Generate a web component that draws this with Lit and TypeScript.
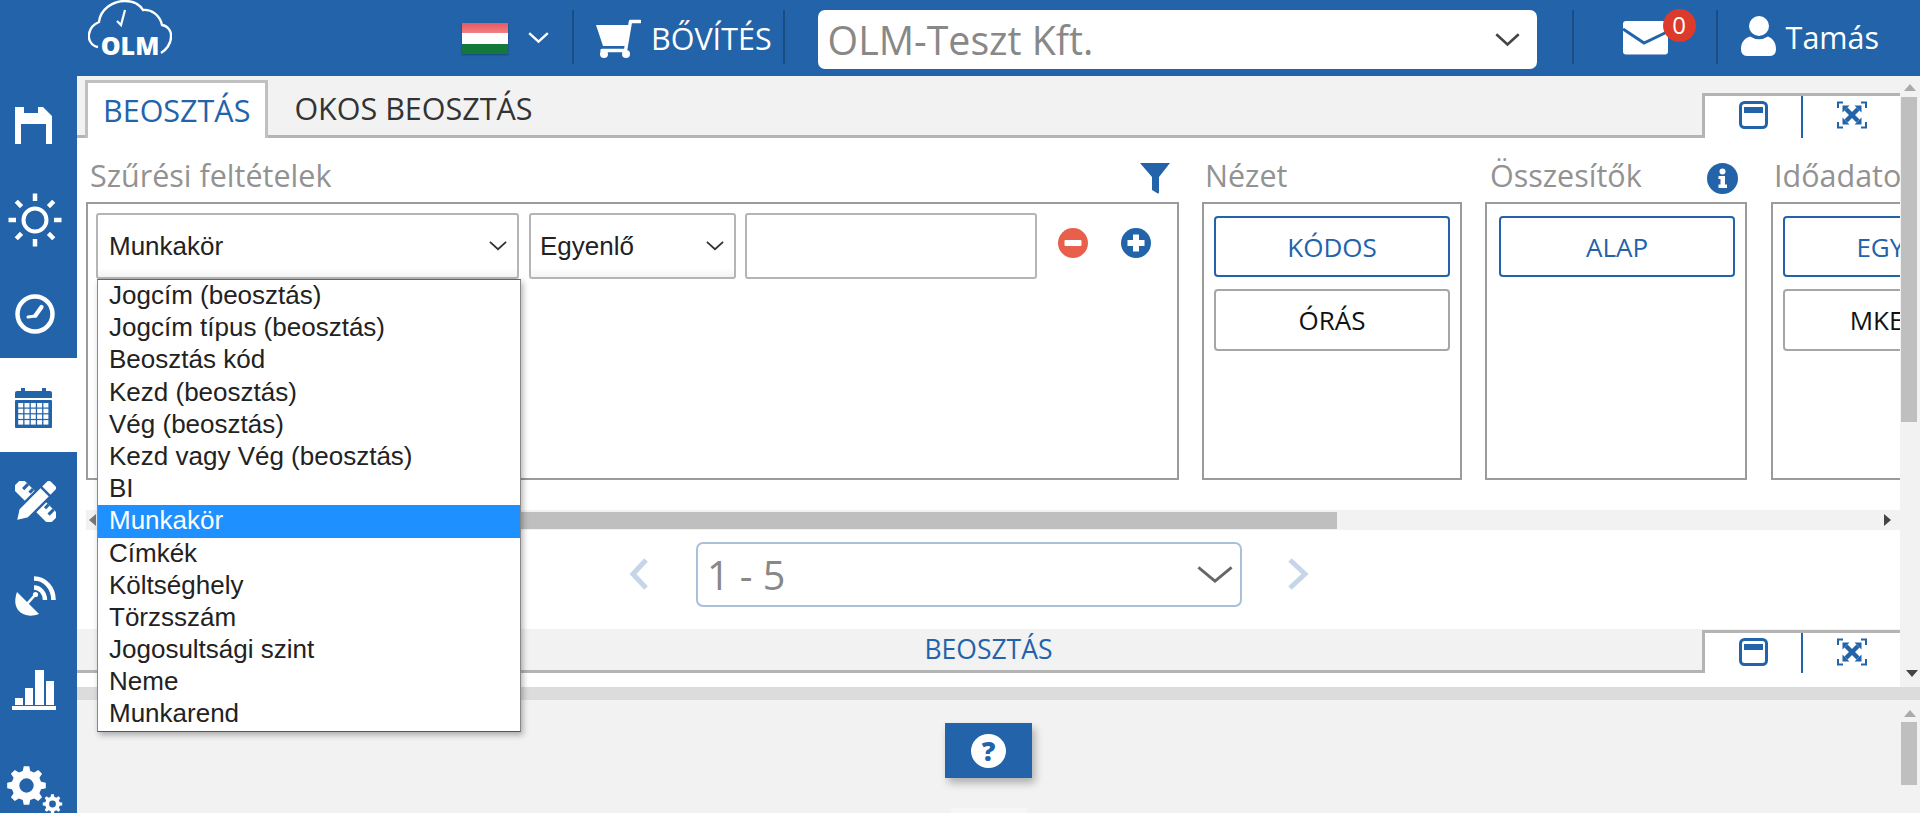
import { LitElement, html, css, svg } from 'lit';
import { customElement } from 'lit/decorators.js';

const BLUE = '#2263a9';

// gear outline as a polygon plus a round hole
function gear(cx: number, cy: number, ro: number, ri: number, hole: number, teeth: number) {
  const pts: string[] = [];
  const step = (Math.PI * 2) / teeth;
  for (let i = 0; i < teeth; i++) {
    const a = i * step - Math.PI / 2;
    const seq: [number, number][] = [
      [a - step * 0.32, ri],
      [a - step * 0.18, ro],
      [a + step * 0.18, ro],
      [a + step * 0.32, ri],
    ];
    for (const [ang, r] of seq) {
      pts.push(`${(cx + Math.cos(ang) * r).toFixed(2)} ${(cy + Math.sin(ang) * r).toFixed(2)}`);
    }
  }
  return `M${pts.join('L')}Z M${cx - hole} ${cy}a${hole} ${hole} 0 1 0 ${hole * 2} 0a${hole} ${hole} 0 1 0 ${-hole * 2} 0Z`;
}

const chevron = (w: number, h: number, color: string, sw = 2) => html`
  <svg width=${w} height=${h} viewBox="0 0 ${w} ${h}" fill="none" stroke=${color} stroke-width=${sw}>
    <polyline points="${sw / 2},${sw / 2} ${w / 2},${h - sw} ${w - sw / 2},${sw / 2}"></polyline>
  </svg>`;

const saveIcon = html`<svg width="37" height="37" viewBox="0 0 37 37" fill="#fff">
  <path d="M0 0H9V6H23V0H28L37 9V37H31V17H6V37H0Z"></path></svg>`;

const sunRays = [0, 45, 90, 135, 180, 225, 270, 315];
const sunIcon = html`<svg width="54" height="54" viewBox="0 0 54 54" fill="none" stroke="#fff">
  <circle cx="27" cy="27" r="11.5" stroke-width="4"></circle>
  ${sunRays.map((r) => svg`<line x1="27" y1="0.5" x2="27" y2="8" stroke-width="4.5" transform="rotate(${r} 27 27)"></line>`)}
</svg>`;

const clockIcon = html`<svg width="40" height="40" viewBox="0 0 40 40" fill="none" stroke="#fff">
  <circle cx="20" cy="20" r="17.5" stroke-width="4.5"></circle>
  <path d="M20.5 21.5L26.5 13" stroke-width="4.2" stroke-linecap="round"></path>
  <path d="M20.5 22L13 23" stroke-width="3" stroke-linecap="round"></path>
</svg>`;

const calCells = [0, 1, 2, 3].flatMap((r) => [0, 1, 2, 3, 4].map((c) => [c, r]));
const calendarIcon = html`<svg width="37" height="40" viewBox="0 0 37 40" fill=${BLUE}>
  <rect x="6" y="0" width="4" height="5"></rect>
  <rect x="27" y="0" width="4" height="5"></rect>
  <path d="M0 5Q0 3 2 3H35Q37 3 37 5V10H0Z"></path>
  <rect x="0" y="12" width="37" height="28" rx="1"></rect>
  ${calCells.map(([c, r]) => svg`<rect x=${3.2 + c * 6.3} y=${15 + r * 5.7} width="5" height="4.5" fill="#fff"></rect>`)}
</svg>`;

const toolsIcon = html`<svg width="41" height="41" viewBox="0 0 41 41">
  <g transform="translate(20.5 20.5) rotate(45)">
    <rect x="-26" y="-7" width="52" height="14" rx="1.5" fill="#fff"></rect>
    <rect x="-19" y="-7" width="3" height="7" fill=${BLUE}></rect>
    <rect x="-12" y="-7" width="3" height="5" fill=${BLUE}></rect>
    <rect x="10" y="-7" width="3" height="5" fill=${BLUE}></rect>
    <rect x="17" y="-7" width="3" height="7" fill=${BLUE}></rect>
  </g>
  <g transform="translate(20.5 20.5) rotate(-45)">
    <path d="M-28 0L-17 -7H22Q26 -7 26 -3V3Q26 7 22 7H-17Z" fill="#fff" stroke=${BLUE} stroke-width="2.4"></path>
    <rect x="13" y="-8" width="2.4" height="16" fill=${BLUE}></rect>
  </g>
</svg>`;

const dishIcon = html`<svg width="41" height="41" viewBox="0 0 41 41" fill="none" stroke="#fff">
  <path d="M2 17L24 39C16 42 8 41 3 35C-1 29 0 23 2 17Z" fill="#fff" stroke="none"></path>
  <path d="M12 29L20 20" stroke-width="2.6"></path>
  <circle cx="20.5" cy="19.5" r="2.6" fill="#fff" stroke="none"></circle>
  <path d="M19 3.5C30 3.5 38.5 13 38.5 25" stroke-width="4.6"></path>
  <path d="M19 12.5C25 12.5 30 18 30 25" stroke-width="4.4"></path>
</svg>`;

const chartIcon = html`<svg width="44" height="40" viewBox="0 0 44 40" fill="#fff">
  <rect x="3" y="28" width="8" height="7"></rect>
  <rect x="13" y="18" width="8" height="17"></rect>
  <rect x="23" y="0" width="9" height="35"></rect>
  <rect x="34" y="11" width="8" height="24"></rect>
  <rect x="0" y="36" width="44" height="4"></rect>
</svg>`;

const gearsIcon = html`<svg width="56" height="48" viewBox="0 0 56 48" fill="#fff" fill-rule="evenodd">
  <path d=${gear(19.5, 19.5, 19.5, 15, 7.2, 8)}></path>
  <path d=${gear(45.5, 38, 9.8, 7.4, 3.4, 8)}></path>
</svg>`;

const cartIcon = html`<svg width="45" height="39" viewBox="0 0 45 39">
  <path d="M0 6H33L29 27H7Z" fill="#fff"></path>
  <path d="M44 2.5H34.5L29.5 31.5H6" fill="none" stroke="#fff" stroke-width="3.4" stroke-linejoin="round" stroke-linecap="round"></path>
  <circle cx="8" cy="35" r="4" fill="#fff"></circle>
  <circle cx="30" cy="35" r="4" fill="#fff"></circle>
</svg>`;

const mailIcon = html`<svg width="45" height="34" viewBox="0 0 45 34">
  <rect x="0" y="0" width="45" height="33.5" rx="3" fill="#fff"></rect>
  <path d="M0 8L21 22L44 11" fill="none" stroke=${BLUE} stroke-width="3"></path>
</svg>`;

const userIcon = html`<svg width="35" height="40" viewBox="0 0 35 40" fill="#fff">
  <circle cx="18" cy="10" r="10"></circle>
  <path d="M0 33C0 26 4 22 9 20.5Q18 26 27 20.5C31 22 35 26 35 33Q35 40 29 40H6Q0 40 0 33Z"></path>
</svg>`;

const logo = html`<svg width="84" height="62" viewBox="0 0 84 62" fill="none" stroke="#fff">
  <path d="M10 47C3 46 0 39 1 34C2 28 6 24 11 22C12 10 24 1 37 1C46 1 52 5 55 10C63 9 72 15 74 25C80 26 83.5 31 83 37C83 44 78 50 73 53" stroke-width="2.4"></path>
  <path d="M29 21L33 25L37 10" stroke-width="2.2"></path>
  <text x="42" y="55" text-anchor="middle" fill="#fff" stroke="none" font-family="'Open Sans', sans-serif" font-weight="800" font-size="25">OLM</text>
</svg>`;

const flag = html`<svg width="46" height="31" viewBox="0 0 46 31">
  <defs><linearGradient id="fr" x1="0" y1="0" x2="0" y2="1"><stop offset="0" stop-color="#e8575f"></stop><stop offset="1" stop-color="#f07f83"></stop></linearGradient></defs>
  <rect width="46" height="10" fill="url(#fr)"></rect>
  <rect y="10" width="46" height="11" fill="#fff"></rect>
  <rect y="21" width="46" height="10" rx="1.5" fill="#13793b"></rect>
</svg>`;

const windowIcon = html`<svg width="29" height="28" viewBox="0 0 29 28">
  <rect x="1.5" y="1.5" width="26" height="25" rx="4" fill="none" stroke=${BLUE} stroke-width="3"></rect>
  <rect x="5" y="6" width="19" height="6" fill=${BLUE}></rect>
</svg>`;

const expandIcon = html`<svg width="30" height="28" viewBox="0 0 30 28" fill="none" stroke=${BLUE}>
  <path d="M1 7V1.5H6M24 1.5H29V7M29 21V26.5H24M6 26.5H1V21" stroke-width="2"></path>
  <path d="M9 8L21 20M21 8L9 20" stroke-width="4.4"></path>
  <path d="M5.5 4.5H12.5L5.5 11.5ZM24.5 4.5H17.5L24.5 11.5ZM24.5 23.5H17.5L24.5 16.5ZM5.5 23.5H12.5L5.5 16.5Z" fill=${BLUE} stroke="none"></path>
</svg>`;

const funnelIcon = html`<svg width="30" height="31" viewBox="0 0 30 31" fill=${BLUE}>
  <path d="M0 0H30L19 14V29Q19 31.5 17 30L12 27V14Z"></path>
</svg>`;

const infoIcon = html`<svg width="31" height="31" viewBox="0 0 31 31">
  <circle cx="15.5" cy="15.5" r="15.5" fill=${BLUE}></circle>
  <circle cx="15.5" cy="8.5" r="3" fill="#fff"></circle>
  <path d="M11.5 13H18V21.5H20V25H11.5V21.5H13.5V16H11.5Z" fill="#fff"></path>
</svg>`;

const minusIcon = html`<svg width="30" height="30" viewBox="0 0 30 30">
  <circle cx="15" cy="15" r="15" fill="#e8604c"></circle>
  <rect x="6.5" y="12" width="17" height="6" rx="1" fill="#fff"></rect>
</svg>`;

const plusIcon = html`<svg width="30" height="30" viewBox="0 0 30 30">
  <circle cx="15" cy="15" r="15" fill=${BLUE}></circle>
  <path d="M12 6.5H18V12H23.5V18H18V23.5H12V18H6.5V12H12Z" fill="#fff"></path>
</svg>`;

const helpIcon = html`<svg width="35" height="34" viewBox="0 0 35 34">
  <ellipse cx="17.5" cy="17" rx="17.5" ry="17" fill="#fff"></ellipse>
  <text x="17.5" y="27" text-anchor="middle" fill=${BLUE} font-family="'Open Sans', sans-serif" font-weight="800" font-size="27">?</text>
</svg>`;

const tri = (dir: 'up' | 'down' | 'left' | 'right', color: string) => {
  const pts = {
    up: '0,8 6,1 12,8',
    down: '0,1 12,1 6,8',
    left: '8,0 8,12 1,6',
    right: '1,0 8,6 1,12',
  }[dir];
  return html`<svg width="12" height="12" viewBox="0 0 12 12"><polygon points=${pts} fill=${color}></polygon></svg>`;
};

const navItems = [
  { icon: saveIcon, nudge: true },
  { icon: sunIcon },
  { icon: clockIcon },
  { icon: calendarIcon, active: true, nudge: true },
  { icon: toolsIcon },
  { icon: dishIcon },
  { icon: chartIcon, nudge: true },
  { icon: gearsIcon, last: true },
];

const options = [
  'Jogcím (beosztás)',
  'Jogcím típus (beosztás)',
  'Beosztás kód',
  'Kezd (beosztás)',
  'Vég (beosztás)',
  'Kezd vagy Vég (beosztás)',
  'BI',
  'Munkakör',
  'Címkék',
  'Költséghely',
  'Törzsszám',
  'Jogosultsági szint',
  'Neme',
  'Munkarend',
];

@customElement('app-root')
export class AppRoot extends LitElement {
  static styles = css`
    :host {
      display: block;
      width: 1920px;
      height: 813px;
      overflow: hidden;
      font-family: 'Open Sans', sans-serif;
      background: #fff;
      --blue: #2263a9;
    }
    svg { display: block; flex: none; }

    .header {
      height: 76px;
      background: var(--blue);
      display: flex;
      align-items: center;
      color: #fff;
    }
    .logo { margin-left: 88px; align-self: flex-start; height: 57px; }
    .flag { margin-left: 290px; box-shadow: 0 1px 2px rgba(0, 0, 0, 0.3); }
    .lang-chev { margin-left: 20px; }
    .sep { width: 2px; height: 54px; background: #1a4c86; flex: none; margin-top: -2px; }
    .sep1 { margin-left: 23px; }
    .cart { margin-left: 22px; }
    .grow { margin-left: 10px; font-size: 30.5px; margin-right: 11px; }
    .company {
      margin-left: 33px;
      width: 719px;
      height: 59px;
      margin-top: 3px;
      background: #fff;
      border-radius: 7px;
      display: flex;
      align-items: center;
      justify-content: space-between;
      padding: 0 17px 0 10px;
      box-sizing: border-box;
      color: #888;
      font-size: 39.3px;
    }
    .sep3 { margin-left: 35px; }
    .mail { margin-left: 49px; position: relative; }
    .badge {
      position: absolute;
      left: 40px;
      top: -12px;
      width: 33px;
      height: 33px;
      border-radius: 50%;
      background: #dc3a2a;
      font-size: 24px;
      line-height: 31px;
      text-align: center;
    }
    .sep4 { margin-left: 48px; }
    .user { margin-left: 23px; margin-top: -4px; }
    .name { margin-left: 10px; font-size: 30.5px; margin-top: -2px; }

    .body { display: flex; height: 737px; }

    .nav { width: 77px; background: var(--blue); flex: none; overflow: hidden; }
    .nav-item {
      height: 94px;
      padding: 5px 7px 0 0;
      box-sizing: border-box;
      display: flex;
      align-items: center;
      justify-content: center;
    }
    .nav-item.active { background: #fff; }
    .nav-item.nudge svg { margin-right: 3px; }
    .nav-item.last { padding-top: 16px; height: 95px; }

    .main { flex: 1; min-width: 0; display: flex; flex-direction: column; position: relative; }
    .upper { height: 611px; display: flex; }
    .panel { width: 1823px; display: flex; flex-direction: column; }

    .tabstrip {
      height: 62px;
      background: #f2f2f2;
      border-bottom: 3px solid #b4b4b4;
      box-sizing: border-box;
      padding: 4px 0 0 8px;
      display: flex;
      align-items: stretch;
    }
    .tab {
      font-size: 30.5px;
      color: #333;
      display: flex;
      align-items: center;
      padding: 0 15px 2px 26px;
      margin-bottom: -3px;
    }
    .tab.active {
      background: #fff;
      color: var(--blue);
      border: 3px solid #c0c0c0;
      border-bottom: 0;
      padding: 0 15px 2px 15px;
    }
    .winctl {
      margin-left: auto;
      margin-top: 13px;
      margin-bottom: -3px;
      width: 198px;
      box-sizing: border-box;
      background: #fff;
      border: 3px solid #b4b4b4;
      border-width: 3px 0 0 3px;
      display: flex;
    }
    .winctl > div {
      display: flex;
      align-items: center;
      justify-content: center;
      padding-bottom: 5px;
    }
    .winctl > div:first-child { width: 96px; border-right: 2px solid var(--blue); }
    .winctl > div:last-child { flex: 1; }

    .filters {
      height: 372px;
      overflow: hidden;
      display: flex;
      gap: 23px;
      padding-left: 9px;
    }
    .col { flex: none; }
    .col-head {
      height: 64px;
      box-sizing: border-box;
      padding: 10px 9px 0 3px;
      display: flex;
      justify-content: space-between;
      align-items: center;
      font-size: 30.5px;
      color: #929292;
    }
    .col-head svg { margin-top: 6px; }
    .col-box {
      height: 278px;
      box-sizing: border-box;
      border: 2px solid #9b9b9b;
      padding: 12px 10px;
      display: flex;
      flex-direction: column;
      gap: 12px;
      background: #fff;
    }
    .c-filter { width: 1093px; }
    .c-filter .col-head { padding-left: 4px; }
    .c-view { width: 260px; }
    .c-sum { width: 262px; }
    .c-sum .col-head { padding-left: 5px; }
    .c-sum .col-box { padding-left: 12px; }
    .c-time { width: 260px; margin-left: 1px; }
    .btn {
      height: 61px;
      width: 236px;
      flex: none;
      box-sizing: border-box;
      border-radius: 4px;
      display: flex;
      align-items: center;
      justify-content: center;
      font-size: 26px;
      white-space: nowrap;
      background: #fff;
    }
    .btn.on { border: 2px solid var(--blue); color: var(--blue); }
    .btn.off { border: 2px solid #a6a6a6; color: #111; height: 62px; }

    .filter-row {
      display: flex;
      align-items: flex-start;
      font-family: 'Liberation Sans', Arial, sans-serif;
      font-size: 26px;
      color: #222;
      margin-top: -3px;
    }
    .fld {
      height: 66px;
      box-sizing: border-box;
      border: 2px solid #b5b5b5;
      border-radius: 3px;
      display: flex;
      align-items: center;
      justify-content: space-between;
      background: linear-gradient(#fff 85%, #f4f4f4);
    }
    .fld-a { width: 423px; padding: 0 10px 0 11px; margin-left: -2px; }
    .fld-b { width: 207px; padding: 0 10px 0 9px; margin-left: 10px; }
    .fld-c { width: 292px; margin-left: 9px; background: #fff; }
    .act-minus { margin-left: 21px; margin-top: 15px; }
    .act-plus { margin-left: 33px; margin-top: 15px; }

    .hbar {
      height: 20px;
      margin-left: 9px;
      background: #f2f2f2;
      display: flex;
      align-items: center;
      flex: none;
    }
    .hbar .start { margin-left: 2px; }
    .hbar .thumb { width: 1237px; height: 17px; background: #bfbfbf; }
    .hbar .end { margin-left: auto; margin-right: 5px; }

    .pager {
      height: 99px;
      box-sizing: border-box;
      padding: 12px 0 0 552px;
      display: flex;
      align-items: flex-start;
      flex: none;
    }
    .pg-arrow { margin-top: 16px; }
    .pg-select {
      width: 546px;
      height: 65px;
      margin: 0 45px 0 47px;
      box-sizing: border-box;
      border: 2px solid #a9c0da;
      border-radius: 7px;
      display: flex;
      align-items: center;
      justify-content: space-between;
      padding: 0 7px 0 9px;
      font-size: 39.5px;
      color: #888;
    }

    .botstrip {
      height: 44px;
      background: #f2f2f2;
      border-bottom: 3px solid #b4b4b4;
      box-sizing: border-box;
      display: grid;
      grid-template-columns: 1fr auto 1fr;
      flex: none;
    }
    .botstrip .title { font-size: 26.5px; color: var(--blue); line-height: 40px; grid-column: 2; }
    .botstrip .winctl { grid-column: 3; justify-self: end; margin: 1px 0 -3px; }
    .botstrip .winctl > div { padding-bottom: 3px; }
    .gap { height: 14px; flex: none; }

    .vbar {
      width: 20px;
      background: #f2f2f2;
      flex: none;
      display: flex;
      flex-direction: column;
      align-items: flex-start;
      box-sizing: border-box;
      padding-left: 1px;
    }
    .vbar .arrow { width: 17px; display: flex; justify-content: center; }
    .vbar .thumb { width: 16px; background: #bfbfbf; }
    .v-up { padding-top: 7px; }
    .v-up .thumb { height: 325px; margin-top: 2px; }
    .v-up .arrow.bottom { margin-top: auto; margin-left: 2px; padding-bottom: 6px; }
    .v-low { padding-top: 9px; }
    .v-low .thumb { height: 63px; margin-top: 1px; }

    .graybar { height: 13px; background: #dcdcdc; flex: none; }

    .lower { flex: 1; display: flex; background: #f2f2f2; min-height: 0; }
    .lower-in {
      width: 1823px;
      box-sizing: border-box;
      padding-top: 23px;
      display: flex;
      flex-direction: column;
      align-items: center;
    }
    .help {
      width: 87px;
      height: 55px;
      background: var(--blue);
      box-shadow: 3px 5px 8px rgba(0, 0, 0, 0.28);
      display: flex;
      align-items: center;
      justify-content: center;
      flex: none;
    }
    .stub { width: 76px; height: 10px; background: #f6f6f6; margin-top: 30px; flex: none; }

    .menu {
      position: absolute;
      left: 20px;
      top: 203px;
      width: 424px;
      box-sizing: border-box;
      background: #fff;
      border: 1px solid #888;
      border-top-color: #666;
      border-bottom-color: #555;
      box-shadow: 2px 3px 6px rgba(0, 0, 0, 0.3);
      font-family: 'Liberation Sans', Arial, sans-serif;
      font-size: 26px;
      color: #222;
    }
    .menu div {
      height: 32.2px;
      line-height: 31px;
      padding-left: 11px;
    }
    .menu div.sel { background: #1e90ff; color: #fff; }
  `;

  private winctl() {
    return html`<div class="winctl"><div>${windowIcon}</div><div>${expandIcon}</div></div>`;
  }

  render() {
    return html`
      <div class="header">
        <div class="logo">${logo}</div>
        <div class="flag">${flag}</div>
        <div class="lang-chev">${chevron(21, 12, '#fff', 2.4)}</div>
        <div class="sep sep1"></div>
        <div class="cart">${cartIcon}</div>
        <div class="grow">BŐVÍTÉS</div>
        <div class="sep"></div>
        <div class="company">
          <span>OLM-Teszt Kft.</span>
          ${chevron(25, 14, '#444', 2.6)}
        </div>
        <div class="sep sep3"></div>
        <div class="mail">${mailIcon}<div class="badge">0</div></div>
        <div class="sep sep4"></div>
        <div class="user">${userIcon}</div>
        <div class="name">Tamás</div>
      </div>
      <div class="body">
        <div class="nav">
          ${navItems.map(
            (n) => html`<div class="nav-item ${n.active ? 'active' : ''} ${n.last ? 'last' : ''} ${n.nudge ? 'nudge' : ''}">${n.icon}</div>`
          )}
        </div>
        <div class="main">
          <div class="upper">
            <div class="panel">
              <div class="tabstrip">
                <div class="tab active">BEOSZTÁS</div>
                <div class="tab">OKOS BEOSZTÁS</div>
                ${this.winctl()}
              </div>
              <div class="filters">
                <div class="col c-filter">
                  <div class="col-head"><span>Szűrési feltételek</span>${funnelIcon}</div>
                  <div class="col-box">
                    <div class="filter-row">
                      <div class="fld fld-a"><span>Munkakör</span>${chevron(18, 10, '#333', 1.8)}</div>
                      <div class="fld fld-b"><span>Egyenlő</span>${chevron(18, 10, '#333', 1.8)}</div>
                      <div class="fld fld-c"></div>
                      <div class="act-minus">${minusIcon}</div>
                      <div class="act-plus">${plusIcon}</div>
                    </div>
                  </div>
                </div>
                <div class="col c-view">
                  <div class="col-head"><span>Nézet</span></div>
                  <div class="col-box">
                    <div class="btn on">KÓDOS</div>
                    <div class="btn off">ÓRÁS</div>
                  </div>
                </div>
                <div class="col c-sum">
                  <div class="col-head"><span>Összesítők</span>${infoIcon}</div>
                  <div class="col-box">
                    <div class="btn on">ALAP</div>
                  </div>
                </div>
                <div class="col c-time">
                  <div class="col-head"><span>Időadatok</span></div>
                  <div class="col-box">
                    <div class="btn on">EGYÉNI</div>
                    <div class="btn off">MKEDVE</div>
                  </div>
                </div>
              </div>
              <div class="hbar">
                <div class="start">${tri('left', '#777')}</div>
                <div class="thumb"></div>
                <div class="end">${tri('right', '#444')}</div>
              </div>
              <div class="pager">
                <div class="pg-arrow">
                  <svg width="20" height="32" viewBox="0 0 20 32" fill="none" stroke="#c6d6e8" stroke-width="5"><polyline points="17,2 4,16 17,30"></polyline></svg>
                </div>
                <div class="pg-select"><span>1 - 5</span>${chevron(36, 18, '#666', 2.8)}</div>
                <div class="pg-arrow">
                  <svg width="22" height="32" viewBox="0 0 22 32" fill="none" stroke="#c6d6e8" stroke-width="5"><polyline points="3,2 18,16 3,30"></polyline></svg>
                </div>
              </div>
              <div class="botstrip">
                <div class="title">BEOSZTÁS</div>
                ${this.winctl()}
              </div>
              <div class="gap"></div>
            </div>
            <div class="vbar v-up">
              <div class="arrow">${tri('up', '#aaa')}</div>
              <div class="thumb"></div>
              <div class="arrow bottom">${tri('down', '#444')}</div>
            </div>
          </div>
          <div class="graybar"></div>
          <div class="lower">
            <div class="lower-in">
              <div class="help">${helpIcon}</div>
              <div class="stub"></div>
            </div>
            <div class="vbar v-low">
              <div class="arrow">${tri('up', '#aaa')}</div>
              <div class="thumb"></div>
            </div>
          </div>
          <div class="menu">
            ${options.map((o) => html`<div class=${o === 'Munkakör' ? 'sel' : ''}>${o}</div>`)}
          </div>
        </div>
      </div>
    `;
  }
}
